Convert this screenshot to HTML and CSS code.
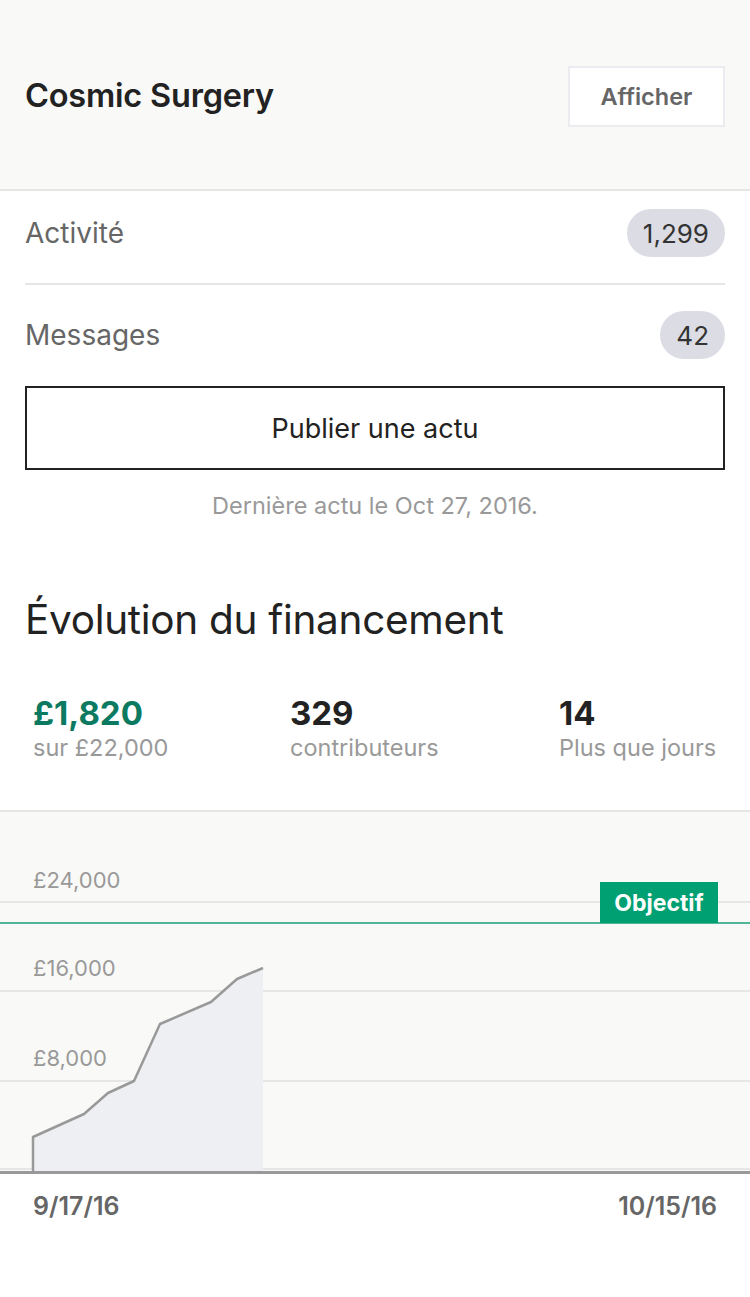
FILE: index.html
```html
<!DOCTYPE html>
<html lang="fr">
<head>
<meta charset="utf-8">
<title>Cosmic Surgery</title>
<link rel="stylesheet" href="styles.css">
</head>
<body>
<header class="top">
  <h1 class="title">Cosmic Surgery</h1>
  <button class="view-btn">Afficher</button>
</header>

<section class="lists">
  <div class="row row-first">
    <span class="row-label">Activité</span>
    <span class="badge">1,299</span>
  </div>
  <div class="row row-second">
    <span class="row-label">Messages</span>
    <span class="badge">42</span>
  </div>
  <button class="publish">Publier une actu</button>
  <p class="last-update">Dernière actu le Oct 27, 2016.</p>
</section>

<h2 class="section-title">Évolution du financement</h2>

<section class="stats">
  <div class="stat">
    <div class="stat-num green">£1,820</div>
    <div class="stat-label">sur £22,000</div>
  </div>
  <div class="stat">
    <div class="stat-num">329</div>
    <div class="stat-label">contributeurs</div>
  </div>
  <div class="stat">
    <div class="stat-num">14</div>
    <div class="stat-label">Plus que jours</div>
  </div>
</section>

<section class="chart">
  <svg class="chart-svg" width="750" height="362" viewBox="0 0 750 362">
    <line x1="0" y1="90" x2="750" y2="90" class="grid"/>
    <line x1="0" y1="179" x2="750" y2="179" class="grid"/>
    <line x1="0" y1="269" x2="750" y2="269" class="grid"/>
    <line x1="0" y1="357" x2="750" y2="357" class="grid"/>
    <path class="area" d="M33,359 L33,325 L84,302 L108,281 L134,269 L160,212 L211,190 L237,167 L263,156 L263,359 Z"/>
    <path class="curve" d="M33,359 L33,325 L84,302 L108,281 L134,269 L160,212 L211,190 L237,167 L263,156"/>
    <line x1="0" y1="111" x2="750" y2="111" class="goal"/>
    <line x1="0" y1="360.5" x2="750" y2="360.5" class="base"/>
  </svg>
  <span class="axis-label l24">£24,000</span>
  <span class="axis-label l16">£16,000</span>
  <span class="axis-label l8">£8,000</span>
  <span class="goal-tag">Objectif</span>
</section>

<div class="dates">
  <span>9/17/16</span>
  <span>10/15/16</span>
</div>
</body>
</html>
```

FILE: styles.css
```css
* { box-sizing: border-box; }

body {
  margin: 0;
  background: #ffffff;
  font-family: Inter, "Liberation Sans", Arial, sans-serif;
  color: #222222;
}

.top {
  height: 191px;
  background: #f9f9f8;
  border-bottom: 2px solid #e6e6e6;
  display: flex;
  align-items: center;
  justify-content: space-between;
  padding: 0 25px;
}

.title {
  margin: 0;
  font-size: 32.5px;
  font-weight: 600;
  color: #222222;
  letter-spacing: -0.2px;
  padding-top: 1px;
}

.view-btn {
  width: 157px;
  height: 61px;
  margin-top: 3px;
  background: #ffffff;
  border: 2px solid #ebebf0;
  font-family: inherit;
  font-size: 23.5px;
  font-weight: 600;
  color: #666666;
  padding: 0;
}

.lists {
  padding: 0 25px;
}

.row {
  display: flex;
  align-items: center;
  justify-content: space-between;
}

.row-first {
  padding: 18px 0 26px;
  border-bottom: 2px solid #e6e6e6;
}

.row-second {
  padding: 26px 0 27px;
}

.row-label {
  font-size: 28px;
  color: #666666;
}

.badge {
  height: 48px;
  min-width: 64px;
  padding: 0 16px;
  border-radius: 24px;
  background: #dcdde4;
  color: #333333;
  font-size: 26px;
  display: flex;
  align-items: center;
  justify-content: center;
}

.publish {
  display: block;
  width: 100%;
  height: 84px;
  background: #ffffff;
  border: 2px solid #222222;
  font-family: inherit;
  font-size: 27px;
  color: #222222;
  padding: 0;
}

.last-update {
  margin: 21px 0 0;
  text-align: center;
  font-size: 23.5px;
  line-height: 30px;
  color: #999999;
}

.section-title {
  margin: 75px 0 0;
  padding: 0 25px;
  font-size: 40.5px;
  line-height: 48px;
  font-weight: 400;
  color: #222222;
  letter-spacing: -0.3px;
}

.stats {
  display: grid;
  grid-template-columns: 257px 269px 1fr;
  padding: 50px 0 46px 33px;
  border-bottom: 2px solid #e6e6e6;
}

.stat-num {
  font-size: 33px;
  line-height: 38px;
  font-weight: 700;
  color: #222222;
}

.stat-num.green {
  color: #0b7a60;
}

.stat-label {
  font-size: 23.5px;
  line-height: 32px;
  color: #999999;
}

.chart {
  position: relative;
  height: 362px;
  background: #f9f9f8;
}

.chart-svg {
  position: absolute;
  left: 0;
  top: 0;
  display: block;
}

.grid {
  stroke: #e6e6e6;
  stroke-width: 2;
}

.area {
  fill: #eeeff2;
}

.curve {
  fill: none;
  stroke: #999999;
  stroke-width: 2.5;
  stroke-linejoin: round;
}

.goal {
  stroke: #1a9e78;
  stroke-width: 1.5;
}

.base {
  stroke: #999999;
  stroke-width: 3;
}

.axis-label {
  position: absolute;
  left: 33px;
  font-size: 22px;
  line-height: 30px;
  color: #999999;
}

.l24 { top: 53px; }
.l16 { top: 141px; }
.l8 { top: 231px; }

.goal-tag {
  position: absolute;
  left: 600px;
  top: 70px;
  width: 118px;
  height: 41px;
  background: #00a072;
  color: #ffffff;
  font-size: 23px;
  font-weight: 700;
  display: flex;
  align-items: center;
  justify-content: center;
}

.dates {
  display: flex;
  justify-content: space-between;
  padding: 17px 33px 0;
  font-size: 25px;
  line-height: 30px;
  font-weight: 600;
  color: #666666;
}
```
